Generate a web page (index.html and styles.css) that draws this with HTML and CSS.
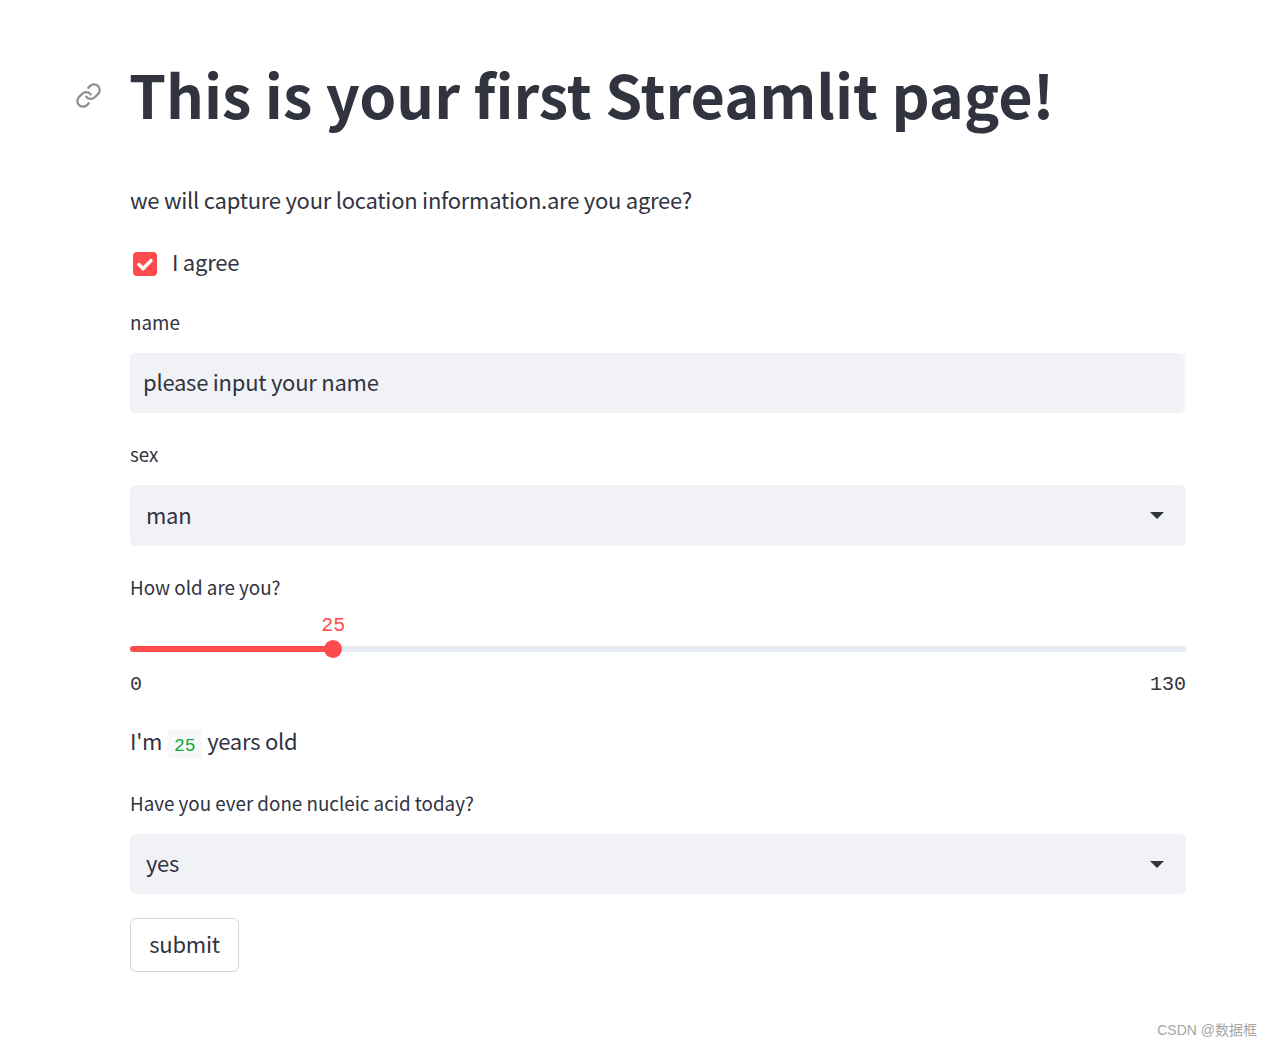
FILE: index.html
```html
<!doctype html>
<html lang="en">

<head>
    <meta charset="utf-8">
    <title>Streamlit page</title>
    <link rel="stylesheet" href="styles.css">
</head>

<body>
    <div class="main">
        <h1 class="page-title">
            <svg class="anchor-icon" viewBox="0 0 24 24" fill="none" stroke="currentColor" stroke-width="2" stroke-linecap="round" stroke-linejoin="round">
                <path d="M10 13a5 5 0 0 0 7.54.54l3-3a5 5 0 0 0-7.07-7.07l-1.72 1.71"></path>
                <path d="M14 11a5 5 0 0 0-7.54-.54l-3 3a5 5 0 0 0 7.07 7.07l1.71-1.71"></path>
            </svg>
            This is your first Streamlit page!
        </h1>
        <p class="intro">we will capture your location information.are you agree?</p>

        <div class="check-row">
            <span class="check-box">
                <svg viewBox="0 0 24 24" fill="none" stroke="#fff" stroke-width="3.4" stroke-linecap="round" stroke-linejoin="round">
                    <path d="M6 12.5l4.2 4.2L18 8.5"></path>
                </svg>
            </span>
            <span class="check-label">I agree</span>
        </div>

        <div class="field-label name-label">name</div>
        <div class="text-input">please input your name</div>

        <div class="field-label sex-label">sex</div>
        <div class="select-box sex-select">
            <span class="select-value">man</span>
            <span class="caret"></span>
        </div>

        <div class="field-label age-label">How old are you?</div>
        <div class="slider">
            <div class="slider-track">
                <div class="slider-fill" style="width: 19.25%">
                    <div class="slider-thumb"><span class="slider-value">25</span></div>
                </div>
            </div>
            <div class="slider-ticks">
                <span>0</span>
                <span>130</span>
            </div>
        </div>

        <p class="age-line">I'm <code class="age-code">25</code> years old</p>

        <div class="field-label nucleic-label">Have you ever done nucleic acid today?</div>
        <div class="select-box nucleic-select">
            <span class="select-value">yes</span>
            <span class="caret"></span>
        </div>

        <button class="submit-button">submit</button>
    </div>
    <div class="watermark">CSDN @数据框</div>
</body>
</html>
```

FILE: styles.css
```css
html, body {
    margin: 0;
    padding: 0;
}
body {
    background-color: #fff;
    color: #31333f;
    font-family: "Noto Sans CJK SC", "Noto Sans", sans-serif;
    height: 1047px;
    overflow: hidden;
    position: relative;
}
.main {
    width: 1056px;
    margin-left: 130px;
    padding-top: 57px;
}
.page-title {
    position: relative;
    margin: 0 0 0 -1px;
    font-size: 59.3px;
    font-weight: 700;
    line-height: 72px;
    white-space: nowrap;
}
.anchor-icon {
    position: absolute;
    left: -54px;
    top: 25px;
    width: 27px;
    height: 27px;
    color: #8d8e95;
}
.intro {
    margin: 56px 0 0;
    font-size: 22px;
    letter-spacing: -0.25px;
    line-height: 28px;
}
.check-row {
    display: flex;
    align-items: center;
    margin-top: 36px;
    height: 30px;
    padding-left: 3px;
}
.check-box {
    width: 24px;
    height: 24px;
    border-radius: 4px;
    background-color: #ff4b4b;
    display: flex;
}
.check-box svg {
    width: 24px;
    height: 24px;
}
.check-label {
    margin-left: 15px;
    padding-bottom: 6px;
    font-size: 22px;
    letter-spacing: -0.25px;
    line-height: 28px;
}
.field-label {
    font-size: 18.8px;
    line-height: 24px;
}
.name-label {
    margin-top: 31px;
}
.sex-label {
    margin-top: 29px;
}
.age-label {
    margin-top: 29px;
}
.nucleic-label {
    margin-top: 32px;
}
.text-input {
    margin-top: 19px;
    height: 60px;
    line-height: 57px;
    padding-left: 13px;
    background-color: #f0f2f6;
    border-radius: 5px;
    box-shadow: inset -1px 0 0 #f0f2f6, inset -2px 0 0 #fff;
    font-size: 22px;
    letter-spacing: -0.25px;
}
.select-box {
    display: flex;
    justify-content: space-between;
    align-items: center;
    margin-top: 19px;
    height: 60px;
    padding: 0 22px 0 16px;
    background-color: #f0f2f6;
    border-radius: 6px;
    font-size: 22px;
    letter-spacing: -0.25px;
}
.select-value {
    padding-bottom: 4px;
}
.sex-select {
    height: 61px;
}
.caret {
    width: 0;
    height: 0;
    border-left: 7px solid transparent;
    border-right: 7px solid transparent;
    border-top: 7px solid #31333f;
}
.slider {
    margin-top: 47px;
}
.slider-track {
    height: 6px;
    border-radius: 3px;
    background-color: #e6eaf1;
}
.slider-fill {
    position: relative;
    height: 6px;
    border-radius: 3px;
    background-color: #ff4b4b;
}
.slider-thumb {
    position: absolute;
    right: -9px;
    top: -6px;
    width: 18px;
    height: 18px;
    border-radius: 50%;
    background-color: #ff4b4b;
}
.slider-value {
    position: absolute;
    left: -6px;
    top: -26px;
    width: 30px;
    text-align: center;
    font-family: "Liberation Mono", monospace;
    font-size: 20px;
    line-height: 24px;
    color: #ff4b4b;
}
.slider-ticks {
    display: flex;
    justify-content: space-between;
    margin-top: 21px;
    font-family: "Liberation Mono", monospace;
    font-size: 20px;
    line-height: 24px;
}
.age-line {
    margin: 28px 0 0;
    font-size: 22px;
    letter-spacing: -0.25px;
    line-height: 30px;
}
.age-code {
    display: inline-block;
    margin-top: 4px;
    padding: 0 7px;
    height: 30px;
    line-height: 34px;
    vertical-align: top;
    background-color: #f6f8fa;
    border-radius: 5px;
    color: #09ab3b;
    font-family: "Liberation Mono", monospace;
    font-size: 18px;
    letter-spacing: 0;
}
.submit-button {
    display: block;
    margin-top: 24px;
    width: 109px;
    height: 54px;
    padding: 0 0 4px;
    background-color: #fff;
    border: 1px solid #d3d5d9;
    border-radius: 6px;
    color: #31333f;
    font-family: inherit;
    font-size: 22px;
    letter-spacing: -0.25px;
}
.watermark {
    position: absolute;
    right: 15px;
    bottom: 7px;
    font-family: "Liberation Sans", "Noto Sans CJK SC", sans-serif;
    font-size: 14px;
    line-height: 20px;
    color: #a5a5a5;
}
```
